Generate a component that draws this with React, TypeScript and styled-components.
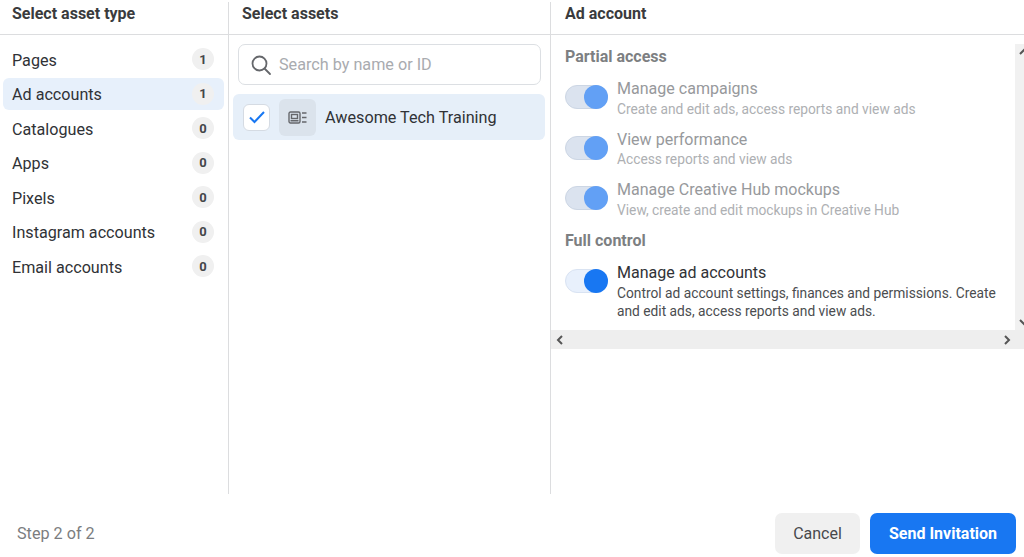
import React from "react";
import styled, { createGlobalStyle } from "styled-components";

const Global = createGlobalStyle`
  html, body { margin: 0; padding: 0; background: #fff; }
  body { font-family: Roboto, "Liberation Sans", sans-serif; overflow: hidden; }
`;
const Page = styled.div`width: 1024px; height: 557px; display: flex; flex-direction: column; overflow: hidden; color: #1c1e21;`;
const Columns = styled.div`display: grid; grid-template-columns: 229px 322px 473px; height: 492px; padding-top: 2px;`;
const Column = styled.section<{ $border?: boolean }>`
  display: flex; flex-direction: column; min-width: 0;
  border-right: ${(p) => (p.$border ? "1px solid #dcdddf" : "0")};
`;
const Head = styled.h2<{ $pad: number }>`
  margin: 0 -1px 0 0; height: 33px; box-sizing: border-box; padding: 3px 0 0 ${(p) => p.$pad}px;
  border-bottom: 1px solid #dcdddf; font-size: 16px; line-height: 18px; font-weight: 700; color: #3a3b3d;
`;
const TypeList = styled.ul`list-style: none; margin: 8px 0 0; padding: 0 4px 0 3px; display: flex; flex-direction: column;`;
const TypeRow = styled.li<{ $active?: boolean }>`
  height: 32px; box-sizing: border-box; margin-bottom: 2.5px; border-radius: 6px; padding: 2px 10px 0 9px; display: flex; align-items: center; justify-content: space-between;
  background: ${(p) => (p.$active ? "#e7f0fb" : "transparent")};
  font-size: 16.15px; color: #303236;
`;
const Count = styled.span`
  width: 22px; height: 22px; border-radius: 50%; background: #f0f0f0; display: flex; align-items: center; justify-content: center;
  font-size: 13px; font-weight: 700; color: #44464a; margin-top: -2px;
`;
const Search = styled.div`
  margin: 9px 9px 0; height: 41px; box-sizing: border-box; border: 1px solid #dcdfe3; border-radius: 7px;
  display: flex; align-items: center; gap: 7px; padding-left: 11px; color: #a9abaf; font-size: 16.2px;
`;
const AssetRow = styled.div`
  margin: 9px 5px 0 4px; height: 46px; border-radius: 6px; background: #e6eff9; display: flex; align-items: center; padding-left: 10px;
  font-size: 16.2px; color: #303236;
`;
const Check = styled.span`
  width: 27px; height: 27px; box-sizing: border-box; background: #fff; border: 1px solid #d5dbe3; border-radius: 6px; display: flex; align-items: center; justify-content: center;
`;
const AssetIcon = styled.span`
  width: 37px; height: 37px; margin: 0 9px; border-radius: 6px; background: #dbe3ec; display: flex; align-items: center; justify-content: center;
`;
const PermArea = styled.div`display: grid; grid-template-columns: 464px 9px; grid-template-rows: 295px 19px;`;
const PermContent = styled.div`padding: 10px 8px 0 14px; min-width: 0;`;
const Section = styled.h3<{ $tight?: boolean }>`
  margin: ${(p) => (p.$tight ? "-4px" : "0")} 0 13px; font-size: 16px; line-height: 23px; font-weight: 700; color: #7d7f82;
`;
const Perm = styled.div<{ $muted?: boolean }>`
  display: flex; gap: 9px; height: 50.7px; color: ${(p) => (p.$muted ? "#97999c" : "#303236")};
`;
const Track = styled.span<{ $muted?: boolean }>`
  position: relative; flex: none; width: 43px; height: 24px; margin-top: 4px; box-sizing: border-box; border-radius: 12px; border: 1px solid ${(p) => (p.$muted ? "#ccd6e4" : "#d9e3f2")};
  background: ${(p) => (p.$muted ? "#dbe3ef" : "#e8f0fc")};
`;
const Knob = styled.span<{ $muted?: boolean }>`
  position: absolute; right: -1px; top: -1px; width: 24px; height: 24px; border-radius: 50%;
  background: ${(p) => (p.$muted ? "#62a0f5" : "#1877f2")};
`;
const PermText = styled.div`min-width: 0;`;
const PermTitle = styled.div`font-size: 16.05px; line-height: 19px; margin-top: -2px;`;
const PermDesc = styled.div<{ $muted?: boolean }>`
  font-size: 13.78px; line-height: 18px; margin-top: 1.5px; color: ${(p) => (p.$muted ? "#aeb0b3" : "#4b4d50")};
`;
const VBar = styled.div`background: #f1f1f1; position: relative; margin-top: 9px;`;
const Arrow = styled.span<{ $top?: number; $bottom?: number; $left?: number; $right?: number }>`
  position: absolute; line-height: 0;
  ${(p) => (p.$top !== undefined ? `top:${p.$top}px;` : "")}
  ${(p) => (p.$bottom !== undefined ? `bottom:${p.$bottom}px;` : "")}
  ${(p) => (p.$left !== undefined ? `left:${p.$left}px;` : "")}
  ${(p) => (p.$right !== undefined ? `right:${p.$right}px;` : "")}
`;
const HBar = styled.div`grid-column: 1 / 3; background: #eeeeee; position: relative;`;
const Footer = styled.footer`
  flex: 1; display: flex; align-items: center; justify-content: space-between; padding: 16px 8px 0 17px;
`;
const Step = styled.span`font-size: 16.2px; color: #7b7d80;`;
const Buttons = styled.div`display: flex; gap: 10px;`;
const Button = styled.button<{ $primary?: boolean }>`
  height: 41px; border: 0; border-radius: 7px; font-family: inherit; font-size: 16px; padding: 0;
  width: ${(p) => (p.$primary ? "146px" : "85px")};
  background: ${(p) => (p.$primary ? "#1877f2" : "#f0f0f0")};
  color: ${(p) => (p.$primary ? "#fff" : "#47494c")};
  font-weight: ${(p) => (p.$primary ? 700 : 400)};
`;

const Chev = ({ d }: { d: string }) => (
  <svg width="10" height="10" viewBox="0 0 10 10" fill="none"><path d={d} stroke="#555" strokeWidth="2" /></svg>
);

const types: [string, number][] = [["Pages", 1], ["Ad accounts", 1], ["Catalogues", 0], ["Apps", 0], ["Pixels", 0], ["Instagram accounts", 0], ["Email accounts", 0]];
const partial = [
  ["Manage campaigns", "Create and edit ads, access reports and view ads"],
  ["View performance", "Access reports and view ads"],
  ["Manage Creative Hub mockups", "View, create and edit mockups in Creative Hub"],
];

export default function App() {
  return (
    <Page>
      <Global />
      <Columns>
        <Column $border>
          <Head $pad={12}>Select asset type</Head>
          <TypeList>
            {types.map(([n, c]) => (
              <TypeRow key={n} $active={n === "Ad accounts"}>{n}<Count>{c}</Count></TypeRow>
            ))}
          </TypeList>
        </Column>
        <Column $border>
          <Head $pad={13}>Select assets</Head>
          <Search>
            <svg width="22" height="22" viewBox="0 0 22 22" fill="none" stroke="#65676b" strokeWidth="1.8">
              <circle cx="9.5" cy="9.5" r="7" /><path d="M14.5 14.5L20 20" strokeLinecap="round" />
            </svg>
            Search by name or ID
          </Search>
          <AssetRow>
            <Check>
              <svg width="18" height="14" viewBox="0 0 18 14" fill="none"><path d="M2 7.5L6.5 12L16 2" stroke="#1877f2" strokeWidth="2" /></svg>
            </Check>
            <AssetIcon>
              <svg width="19" height="13" viewBox="0 0 19 13" fill="none" stroke="#65676b" strokeWidth="1.4">
                <rect x="1" y="1" width="11" height="11" rx="1.5" /><rect x="3.5" y="3.5" width="6" height="4" />
                <path d="M2.5 9.8H10.5M14 2H18.5M14 6.5H18.5M14 11H18.5" />
              </svg>
            </AssetIcon>
            Awesome Tech Training
          </AssetRow>
        </Column>
        <Column>
          <Head $pad={14}>Ad account</Head>
          <PermArea>
            <PermContent>
              <Section>Partial access</Section>
              {partial.map(([t, d]) => (
                <Perm key={t} $muted>
                  <Track $muted><Knob $muted /></Track>
                  <PermText><PermTitle>{t}</PermTitle><PermDesc $muted>{d}</PermDesc></PermText>
                </Perm>
              ))}
              <Section $tight>Full control</Section>
              <Perm>
                <Track><Knob /></Track>
                <PermText>
                  <PermTitle>Manage ad accounts</PermTitle>
                  <PermDesc>Control ad account settings, finances and permissions. Create and edit ads, access reports and view ads.</PermDesc>
                </PermText>
              </Perm>
            </PermContent>
            <VBar>
              <Arrow $top={3} $left={4}><Chev d="M1 7L5 3L9 7" /></Arrow>
              <Arrow $bottom={3} $left={4}><Chev d="M1 3L5 7L9 3" /></Arrow>
            </VBar>
            <HBar>
              <Arrow $top={5} $left={4}><Chev d="M7 1L3 5L7 9" /></Arrow>
              <Arrow $top={5} $right={12}><Chev d="M3 1L7 5L3 9" /></Arrow>
            </HBar>
          </PermArea>
        </Column>
      </Columns>
      <Footer>
        <Step>Step 2 of 2</Step>
        <Buttons>
          <Button>Cancel</Button>
          <Button $primary>Send Invitation</Button>
        </Buttons>
      </Footer>
    </Page>
  );
}
